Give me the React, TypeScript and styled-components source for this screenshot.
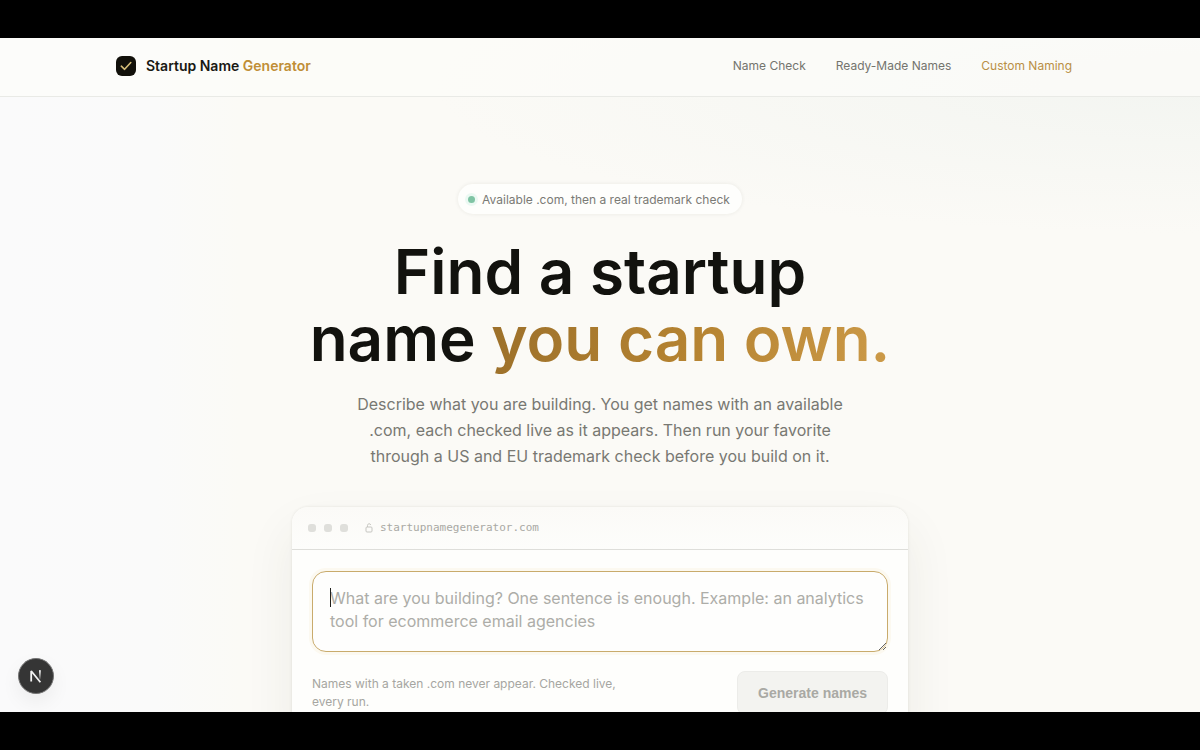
import React from "react";
import styled, { createGlobalStyle } from "styled-components";

const GlobalStyle = createGlobalStyle`
  *, *::before, *::after { box-sizing: border-box; }
  body {
    margin: 0;
    background: #000;
    font-family: Inter, "Liberation Sans", sans-serif;
    color: #14140f;
  }
`;

const Stage = styled.div`
  height: 100vh;
  padding: 38px 0;
  background: #000;
`;

const Page = styled.div`
  position: relative;
  height: 100%;
  overflow: hidden;
  background:
    radial-gradient(ellipse 64% 22% at 100% 7%, #f3f5f1 0%, rgba(243, 245, 241, 0) 100%),
    linear-gradient(90deg, #fafafb 0%, #fafafa 13%, #fbfaf6 20%, #fbfaf6 100%);
`;

const Header = styled.header`
  border-bottom: 1px solid #e9eae6;
  background: rgba(252, 252, 250, 0.7);
`;

const HeaderInner = styled.div`
  display: flex;
  align-items: center;
  justify-content: space-between;
  max-width: 968px;
  height: 58px;
  margin: 0 auto;
  padding: 0 12px 2px 0;
`;

const Brand = styled.a`
  display: flex;
  align-items: center;
  gap: 10px;
  color: #191914;
  font-size: 14px;
  font-weight: 600;
  line-height: 20px;
  text-decoration: none;
`;

const Accent = styled.span`
  color: #c08e36;
`;

const Nav = styled.nav`
  display: flex;
  gap: 30px;
`;

const NavLink = styled.a<{ $active?: boolean }>`
  color: ${(p) => (p.$active ? "#b98f45" : "#74746e")};
  font-size: 12px;
  line-height: 20px;
  text-decoration: none;
`;

const Hero = styled.main`
  display: flex;
  flex-direction: column;
  align-items: center;
  padding-top: 87px;
`;

const Pill = styled.p`
  display: flex;
  align-items: center;
  gap: 7px;
  height: 30px;
  margin: 0;
  padding: 0 12px 0 10px;
  border-radius: 15px;
  background: #fefefc;
  box-shadow: 0 0 4px rgba(40, 40, 20, 0.08);
  color: #7a7a75;
  font-size: 12px;
`;

const Dot = styled.span`
  width: 7px;
  height: 7px;
  border-radius: 50%;
  background: #7fc4a4;
  box-shadow: 0 0 0 3px #ecf9f3;
`;

const Title = styled.h1`
  margin: 24px 0 0;
  color: #12120e;
  font-size: 62px;
  font-weight: 600;
  line-height: 67px;
  text-align: center;
`;

const GoldText = styled.span`
  background: linear-gradient(100deg, #9c702a 0%, #b58331 50%, #cc9a48 100%);
  background-clip: text;
  -webkit-background-clip: text;
  color: transparent;
`;

const Lead = styled.p`
  max-width: 500px;
  margin: 19px 0 0;
  color: #787872;
  font-size: 16px;
  line-height: 26px;
  text-align: center;
`;

const Card = styled.section`
  width: 100%;
  max-width: 616px;
  margin-top: 38px;
  border-radius: 16px;
  background: #fefefc;
  box-shadow: 0 0 3px rgba(40, 40, 20, 0.1), 0 24px 50px rgba(60, 60, 40, 0.08);
`;

const AddressBar = styled.div`
  display: flex;
  align-items: center;
  height: 43px;
  padding: 0 16px;
  border-bottom: 1px solid #dededa;
  border-radius: 16px 16px 0 0;
  background: linear-gradient(#fbfaf7, #fdfdfb);
  color: #a9a9a4;
`;

const WindowDots = styled.span`
  display: flex;
  gap: 8px;
  margin-right: 17px;
`;

const WindowDot = styled.i`
  width: 8px;
  height: 8px;
  border-radius: 3px;
  background: #dfdfdb;
`;

const Address = styled.span`
  margin-left: 7px;
  font-family: "DejaVu Sans Mono", "Liberation Mono", monospace;
  font-size: 11px;
  line-height: 16px;
`;

const Form = styled.form`
  padding: 21px 20px;
`;

const Field = styled.div`
  position: relative;
  display: flex;
`;

const Prompt = styled.textarea`
  width: 100%;
  height: 81px;
  padding: 15px 17px;
  border: 1px solid #c9ab6c;
  border-radius: 14px;
  outline: none;
  background: #fefefd;
  box-shadow: 0 0 0 3px #fcf9f0;
  color: #14140f;
  font-family: inherit;
  font-size: 16px;
  line-height: 23px;
  resize: vertical;
  &::placeholder { color: #adada8; opacity: 1; }
`;

const Caret = styled.span`
  position: absolute;
  top: 17px;
  left: 18px;
  width: 1px;
  height: 19px;
  background: #22221e;
`;

const FormFooter = styled.div`
  display: flex;
  align-items: flex-start;
  justify-content: space-between;
  margin-top: 19px;
`;

const Note = styled.p`
  max-width: 320px;
  margin: 4px 0 0;
  color: #a6a6a1;
  font-size: 12px;
  line-height: 18px;
`;

const Submit = styled.button`
  height: 44px;
  padding: 0 20px;
  border: 1px solid #ecece9;
  border-radius: 8px;
  background: #f3f3f0;
  color: #a9a9a4;
  font-family: "Liberation Sans", Arial, sans-serif;
  font-size: 14px;
  font-weight: 700;
`;

const DevBadge = styled.button`
  position: absolute;
  bottom: 18px;
  left: 18px;
  display: grid;
  place-items: center;
  width: 36px;
  height: 36px;
  padding: 0;
  border: 1px solid #757575;
  border-radius: 50%;
  background: #353535;
  box-shadow: 0 8px 20px rgba(0, 0, 0, 0.06);
`;

const navItems = [
  { label: "Name Check" },
  { label: "Ready-Made Names" },
  { label: "Custom Naming", active: true },
];

function BrandMark() {
  return (
    <svg width="20" height="20" viewBox="0 0 20 20" aria-hidden="true">
      <rect width="20" height="20" rx="6" fill="#11100a" />
      <path d="M5.3 10.2 8.6 13.3 14.8 6.5" fill="none" stroke="#d5bd78" strokeWidth="1.6" strokeLinecap="round" strokeLinejoin="round" />
    </svg>
  );
}

function LockIcon() {
  return (
    <svg width="8" height="10" viewBox="0 0 8 10" fill="none" stroke="#c6c6c1" aria-hidden="true">
      <rect x="1" y="4" width="6" height="5" rx="1" />
      <path d="M2.5 4V2.5a1.7 1.7 0 0 1 3.3-.6" />
    </svg>
  );
}

function NextMark() {
  return (
    <svg width="14" height="14" viewBox="0 0 14 14" fill="none" aria-hidden="true">
      <defs>
        <linearGradient id="stem" x1="0" y1="0" x2="0" y2="1">
          <stop offset="0" stopColor="#fff" />
          <stop offset="1" stopColor="#fff" stopOpacity="0.1" />
        </linearGradient>
      </defs>
      <path d="M2.2 12.5V2L11.4 13.2" stroke="#f2f2f2" strokeWidth="1.8" strokeLinejoin="bevel" />
      <rect x="10" y="1.2" width="1.8" height="9" fill="url(#stem)" />
    </svg>
  );
}

export default function App() {
  return (
    <Stage>
      <GlobalStyle />
      <Page>
        <Header>
          <HeaderInner>
            <Brand href="#home">
              <BrandMark />
              <span>
                Startup Name <Accent>Generator</Accent>
              </span>
            </Brand>
            <Nav>
              {navItems.map((item) => (
                <NavLink key={item.label} href="#" $active={item.active}>
                  {item.label}
                </NavLink>
              ))}
            </Nav>
          </HeaderInner>
        </Header>
        <Hero>
          <Pill>
            <Dot />
            Available .com, then a real trademark check
          </Pill>
          <Title>
            Find a startup
            <br />
            name <GoldText>you can own.</GoldText>
          </Title>
          <Lead>
            Describe what you are building. You get names with an available .com, each checked live as it appears. Then
            run your favorite through a US and EU trademark check before you build on it.
          </Lead>
          <Card>
            <AddressBar>
              <WindowDots>
                <WindowDot />
                <WindowDot />
                <WindowDot />
              </WindowDots>
              <LockIcon />
              <Address>startupnamegenerator.com</Address>
            </AddressBar>
            <Form onSubmit={(e) => e.preventDefault()}>
              <Field>
                <Prompt
                  aria-label="What are you building?"
                  placeholder="What are you building? One sentence is enough. Example: an analytics tool for ecommerce email agencies"
                />
                <Caret />
              </Field>
              <FormFooter>
                <Note>Names with a taken .com never appear. Checked live, every run.</Note>
                <Submit type="submit" disabled>
                  Generate names
                </Submit>
              </FormFooter>
            </Form>
          </Card>
        </Hero>
        <DevBadge type="button" aria-label="Open developer tools">
          <NextMark />
        </DevBadge>
      </Page>
    </Stage>
  );
}
